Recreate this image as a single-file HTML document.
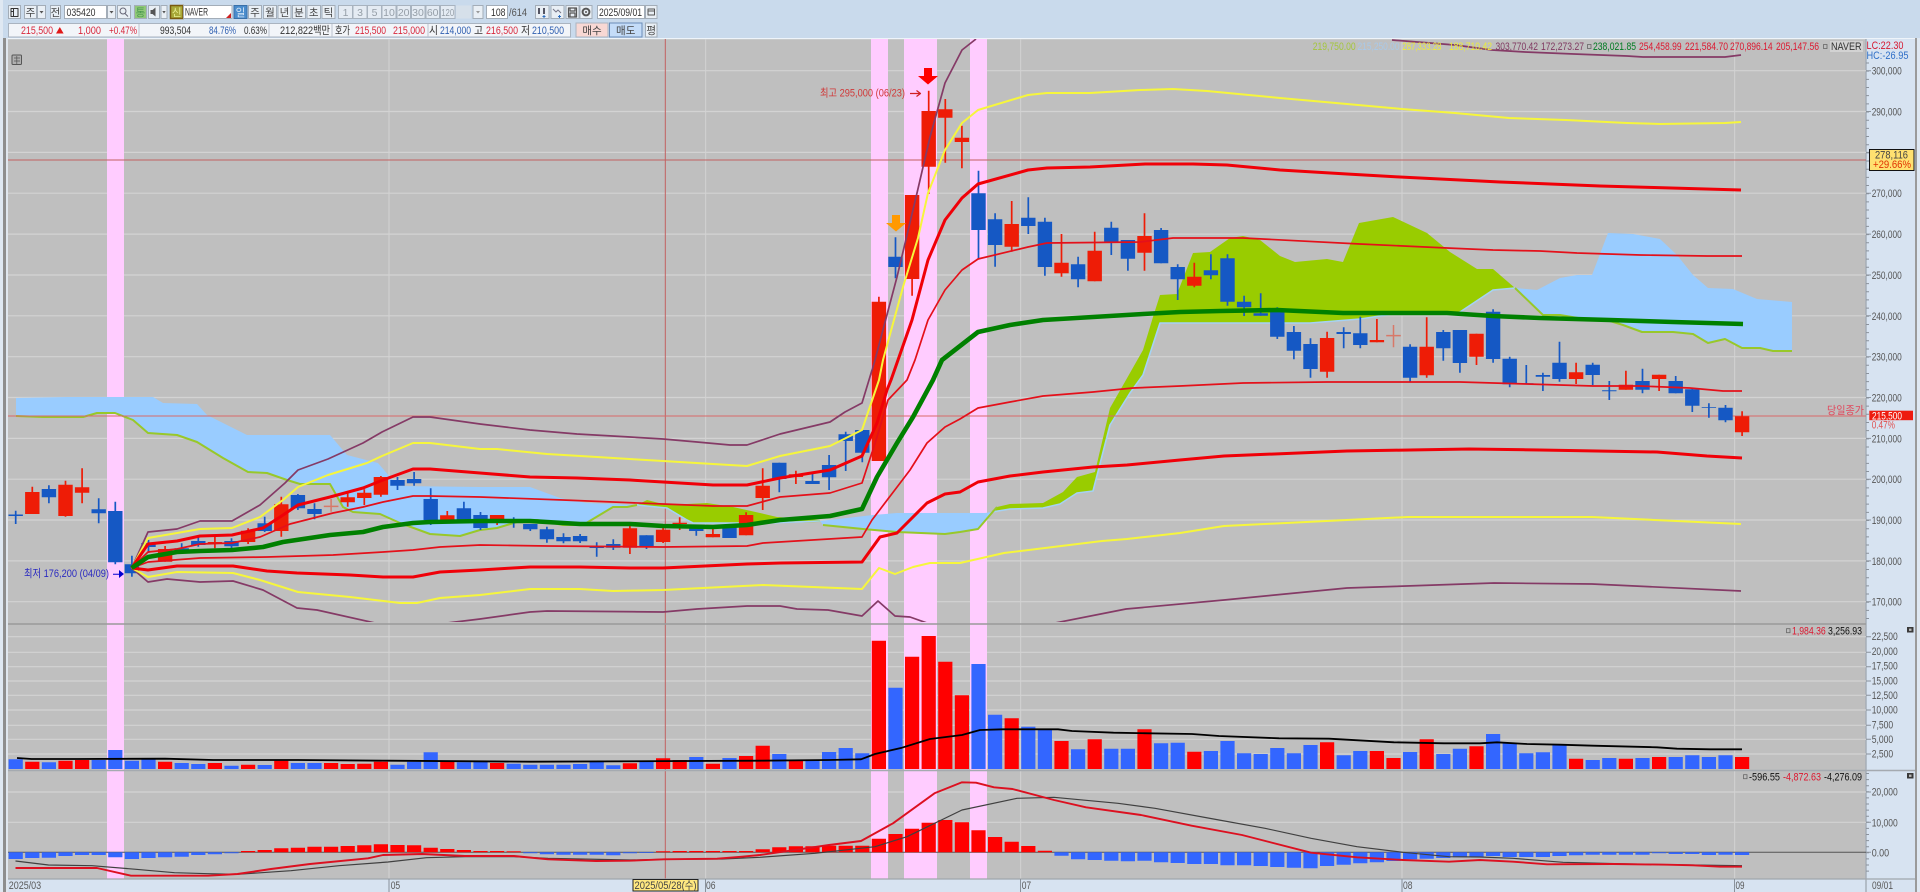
<!DOCTYPE html>
<html lang="ko"><head><meta charset="utf-8"><title>NAVER 035420</title>
<style>
html,body{margin:0;padding:0;background:#c9daec;width:1920px;height:892px;overflow:hidden}
svg{display:block;filter:blur(.35px)}
text{font-family:"Liberation Sans","Noto Sans CJK KR",sans-serif;font-size:11px}
.b{fill:#e9eff5;stroke:#a3adb8;stroke-width:1}
.t{fill:#454545;text-anchor:middle;font-size:10.5px}
.ax{fill:#555;font-size:11px}
.g{fill:none;stroke:#d3d3d3;stroke-width:1.2}
path,polyline,polygon{stroke-linejoin:round}
polyline{fill:none}
</style></head><body>
<svg width="1920" height="892" viewBox="0 0 1920 892" xmlns="http://www.w3.org/2000/svg">
<defs><clipPath id="m"><rect x="8" y="39" width="1858" height="583"/></clipPath></defs>
<rect width="1920" height="892" fill="#c9daec"/>
<rect x="0" y="0" width="3" height="892" fill="#dfe8f2"/><rect x="3" y="38" width="3" height="854" fill="#8e8e8e"/><rect x="6" y="38" width="2" height="854" fill="#dfe6ee"/>
<rect x="8" y="39" width="1858" height="840" fill="#bfbfbf"/>
<rect x="8" y="38" width="1907" height="1.2" fill="#eef4fa"/>
<!-- axis panel -->
<rect x="1866" y="39" width="49" height="853" fill="#d7e3f1"/>
<rect x="8" y="879" width="1858" height="13" fill="#d7e3f1"/>
<rect x="1915" y="38" width="2" height="854" fill="#9a9a9a"/><rect x="1917" y="38" width="3" height="854" fill="#dfe8f2"/>
<path d="M1866 39V892" stroke="#a3abb5" stroke-width="1.4"/>
<!-- grid -->
<path class="g" d="M8 70.7H1866M8 111.5H1866M8 152.4H1866M8 193.2H1866M8 234.1H1866M8 275H1866M8 315.8H1866M8 356.7H1866M8 397.5H1866M8 438.4H1866M8 479.2H1866M8 520H1866M8 560.9H1866M8 601.7H1866"/>
<path class="g" d="M8 636.7H1866M8 652.3H1866M8 666.7H1866M8 681H1866M8 695.3H1866M8 710H1866M8 725.3H1866M8 739.3H1866M8 754H1866M8 792H1866M8 822.3H1866"/>
<!-- pink -->
<path fill="#ffccff" d="M107 39h17V879h-17zM871 39h17V879h-17zM904 39h33V879h-33zM970 39h17V879h-17z"/>
<path fill="none" stroke="#d3d3d3" d="M389 39V879M705.7 39V879M1020.7 39V879M1402 39V879M1734.7 39V879"/>
<!-- cross -->
<path fill="none" stroke="#c26060" stroke-width="1" d="M665.3 39V879"/>
<g clip-path="url(#m)">
<polygon fill="#99ccff" points="16,398 67,397 153,397 163,403 197,404 207,415 247,435 330,435 347,455 378,463 390,477 397,486 480,487 530,487 560,498 587,503 637,505 627,507 613,507 583,525 563,525 537,520 517,522 497,528 480,530 460,536 430,534 400,523 380,514 353,512 343,507 330,484 300,484 287,480 267,473 248,472 223,458 197,442 177,435 148,433 133,420 115,413 97,413 83,417 43,417 16,416"/>
<polygon fill="#99ccff" points="820,521 847,518 873,515 897,513 985,513 992,512 978,529 960,532 945,534 897,532 863,529 823,525"/>
<polygon fill="#99ccff" points="1515,288 1537,290 1560,278 1577,275 1592,275 1608,233 1633,234 1660,239 1677,255 1693,275 1708,288 1733,289 1757,299 1792,302 1792,351 1773,351 1760,348 1742,348 1725,339 1708,343 1693,334 1673,332 1642,332 1623,325 1610,321 1590,320 1560,315 1543,315"/>
<polygon fill="#99cc00" points="637,505 647,500 667,505 707,503 733,507 760,513 777,517 820,520 820,522 770,523 693,523 687,520 667,508"/>
<polygon fill="#99cc00" points="992,511 997,507 1010,504 1043,503 1063,492 1077,477 1095,472 1110,408 1122,387 1143,350 1153,317 1160,295 1177,294 1193,253 1210,252 1230,238 1243,236 1260,240 1280,256 1295,262 1327,259 1343,262 1359,223 1393,217 1427,233 1450,252 1477,269 1493,269 1515,288 1493,290 1460,312 1447,314 1393,314 1360,319 1310,323 1160,323 1143,375 1130,393 1110,425 1093,491 1077,493 1060,504 1043,508 1010,509"/>
<polyline stroke="#a5d2f5" stroke-width="1.6" points="637,505 667,508 687,520 693,523 770,523 820,521"/>
<polyline stroke="#a5d2f5" stroke-width="1.6" points="992,512 1010,509 1043,508 1060,504 1077,493 1093,491 1110,425 1130,393 1143,375 1160,323 1310,323 1360,319 1393,314 1447,314 1460,312 1493,290 1515,288"/>
<polyline stroke="#98c82a" stroke-width="2" points="16,416 43,417 83,417 97,413 115,413 133,420 148,433 177,435 197,442 223,458 248,472 267,473 287,480 300,484 330,484 343,507 353,512 380,514 400,523 430,534 460,536 480,530 497,528 517,522 537,520 563,525 583,525 613,507 627,507 637,505"/>
<polyline stroke="#98c82a" stroke-width="2" points="823,525 863,529 897,532 945,534 960,532 978,529 990,515 997,507"/>
<polyline stroke="#98c82a" stroke-width="2" points="1515,288 1543,315 1560,315 1590,320 1610,321 1623,325 1642,332 1673,332 1693,334 1708,343 1725,339 1742,348 1760,348 1773,351 1792,351"/>
<!-- crosshair lines -->
<path fill="none" stroke="#c26060" stroke-width="1" d="M8 160H1866"/>
<path fill="none" stroke="#d86a6a" stroke-width="1" d="M8 416H1866"/>
<!-- candles wicks -->
<path fill="none" stroke="#ee1c06" stroke-width="1.7" d="M32.3 486.7V514M65.5 480.7V516.7M82.1 468.3V503.3M165.1 546V561.7M214.9 535V548.3M248.1 528.3V544M281.3 496.7V536.7M347.7 493.3V506.7M364.3 489.3V505M380.9 476V496.7M447.3 511V523M497.1 515V525M629.9 522V554M663.1 526V543M679.7 517.3V530M712.9 528.3V537.3M746.1 512.3V535.3M762.7 468.3V510M795.9 470.7V484M878.9 296.7V461M912.1 195V295.7M928.7 90.7V194M945.3 99V162.7M961.9 125.7V168.3M1011.7 201V251.7M1061.5 234V276.7M1094.7 231.7V281.3M1144.5 213.3V270.7M1194.3 262.7V287.3M1327.1 331.7V377.7M1376.9 319V342.3M1426.7 317.3V377.7M1476.5 333.7V365M1576.1 362.7V384M1625.9 370.7V389.7M1659.1 374.7V391M1742.1 411.3V436"/>
<path fill="none" stroke="#1558c4" stroke-width="1.7" d="M15.7 510.7V524M48.9 485.3V503.3M98.7 498.3V523.3M115.3 501.7V564.3M131.9 555.7V576.7M148.5 540V553M181.7 543.3V553.3M198.3 535V546.7M231.5 538.3V548.3M264.7 516.7V532M297.9 494V510M314.5 503.3V519.3M397.5 477V490M414.1 472V485.7M430.7 488.3V525M463.9 501.7V523.3M480.5 512V530M513.7 517.3V527.7M530.3 524V531M546.9 526.7V542.7M563.5 533.3V543.3M580.1 534V543M596.7 542.3V556.7M613.3 539.3V550M646.5 535.3V549M696.3 525V535.7M779.3 462.7V492.3M812.5 473.3V484M829.1 455V490M845.7 431.7V471M862.3 430V462.3M895.5 237.3V278.3M978.5 170.7V259.3M995.1 213.3V266.7M1028.3 197.3V234M1044.9 217.7V275.7M1078.1 256.7V287.3M1111.3 221.7V255M1127.9 240V270.7M1161.1 228V263.3M1177.7 264.3V300M1210.9 254.3V279.3M1227.5 254.3V305.7M1244.1 295.7V316M1260.7 293.3V315.7M1277.3 307.3V339M1293.9 326V359.3M1310.5 338.3V377.7M1343.7 327.3V348.3M1360.3 316.7V348.3M1410.1 344.3V381.7M1443.3 330V360.7M1459.9 330V372.7M1493.1 309.3V362.7M1509.7 356.7V387.3M1526.3 365V384.3M1542.9 372.7V391M1559.5 341.7V381.7M1592.7 362.7V385M1609.3 381V400M1642.5 368.7V393.3M1675.7 376V393.3M1692.3 388V412M1708.9 403.3V417.7M1725.5 405V422.3"/>
<path fill="none" stroke="#d87868" stroke-width="1.5" d="M331.1 499V511.7M323.8 506.4H338.4M1393.5 325V347.3M1386.2 335.6H1400.8"/>
<!-- bodies -->
<path fill="none" stroke="#ee1c06" stroke-width="14.4" d="M32.3 492V514M65.5 484.7V516M82.1 487.3V492.7M165.1 549V561.7M214.9 542V543.5M248.1 530.7V542M281.3 504.3V531M347.7 497.3V502.3M364.3 492.7V498M380.9 477V494.7M447.3 515.3V520M497.1 515V521.7M629.9 528.3V547.7M663.1 529.7V542M679.7 522.7V524M712.9 534V537.3M746.1 515V535.3M762.7 485.7V498M795.9 474.3V477M878.9 301.7V461M912.1 195V279M928.7 111V166.7M945.3 109.3V117.7M961.9 137.7V142M1011.7 224V246.7M1061.5 262.7V273.3M1094.7 250.7V281.3M1144.5 236V252.7M1194.3 276.7V285.7M1327.1 338V371.7M1376.9 340V342.3M1426.7 346.7V375.3M1476.5 333.7V356.7M1576.1 372.3V379M1625.9 384.7V389.7M1659.1 374.7V379M1742.1 416.3V432.3"/>
<path fill="none" stroke="#1558c4" stroke-width="14.4" d="M15.7 514.5V516M48.9 489V497.3M98.7 509.3V513.3M115.3 511V562.3M131.9 564.3V573.3M148.5 543V547M181.7 548.3V550.7M198.3 541V545M231.5 541V546.3M264.7 523.3V531M297.9 495V508.3M314.5 509V514M397.5 480V485.7M414.1 479V483.3M430.7 499V520M463.9 508.3V521.7M480.5 515V528M513.7 520V521M530.3 524V529.3M546.9 529.3V539.3M563.5 537V541.3M580.1 536V541.3M596.7 546.7V548M613.3 544V547.7M646.5 535.3V546M696.3 528.3V531M729.5 526.7V538M779.3 462.7V479M812.5 481V484M829.1 465V477.3M845.7 434.3V441M862.3 430V452.7M895.5 256.7V267M978.5 193.3V230M995.1 219.3V245M1028.3 217.7V226M1044.9 221.7V267M1078.1 264.3V279.3M1111.3 227.7V241.7M1127.9 240V258.7M1161.1 230V263.3M1177.7 267V279.3M1210.9 270.3V275.3M1227.5 258.3V301.7M1244.1 301.7V307.3M1260.7 313.3V315.7M1277.3 310V336.7M1293.9 332V350.7M1310.5 344V369M1343.7 332V334M1360.3 333.3V345M1410.1 346.7V377.7M1443.3 332V348.3M1459.9 330V363M1493.1 311.7V359M1509.7 358.7V384.3M1526.3 383.3V384.3M1542.9 375V376.7M1559.5 362.7V379M1592.7 364.7V375M1609.3 390.3V391.3M1642.5 381V389.7M1675.7 381V393.3M1692.3 389.3V405.7M1708.9 407.3V408M1725.5 407.7V420.3"/>
<!-- bands -->
<polyline stroke="#853a66" stroke-width="1.7" points="131.7,568 148,532 177,529 200,521 232,521 260,505 285,483 298,470 328,459 363,443 382,432 413,417 430,417 480,424 530,430 577,434 630,437 663,439 697,442 730,445 747,445 780,434 830,422 845,412 862,403 869,380 875,360 897,277 917,193 930,137 945,83 962,50 976,39"/>
<polyline stroke="#853a66" stroke-width="1.7" points="1392,40 1455,45 1492,50 1525,52 1574,54 1627,56 1643,57 1725,57 1741,55"/>
<polyline stroke="#853a66" stroke-width="1.7" points="131.7,568 148,582 167,579 200,582 233,581 263,590 297,608 317,610 375,623"/>
<polyline stroke="#853a66" stroke-width="1.7" points="447,623 480,619 530,612 547,611 663,612 697,609 747,606 780,606 797,609 828,610 862,616 878,601 895,616 910,617 927,623"/>
<polyline stroke="#853a66" stroke-width="1.7" points="1050,624 1126,609 1224,600 1347,588 1494,583 1592,584 1741,591"/>
<polyline stroke="#f6f63c" stroke-width="2" points="131.7,568 148,538 177,533 200,529 232,528 260,517 283,500 298,487 328,475 367,463 382,456 413,443 430,443 480,449 497,449 547,454 597,457 663,461 713,464 747,466 780,456 830,446 862,430 879,380 883,360 903,287 918,238 928,193 945,150 962,123 978,110 1028,95 1047,93 1090,93 1140,90 1173,89 1207,91 1280,98 1347,104 1402,109 1455,113 1509,118 1566,120 1627,123 1660,124 1725,123 1741,122"/>
<polyline stroke="#f6f63c" stroke-width="2" points="131.7,568 148,577 177,572 233,573 260,580 298,592 350,597 400,603 417,603 440,598 480,595 530,589 580,589 613,591 663,590 763,585 862,589 879,568 895,574 913,567 930,563 960,563 1004,553 1102,541 1127,539 1180,533 1224,526 1408,517 1592,517 1741,524"/>
<polyline stroke="#e4101a" stroke-width="1.7" points="131.7,568 148,552 177,549 200,544 232,543 260,537 290,524 333,513 363,507 383,502 413,496 430,496 480,497 563,500 613,502 663,504 713,506 747,506 780,497 830,493 862,483 877,437 888,400 907,380 915,360 928,320 945,290 962,270 978,259 1028,247 1047,243 1140,242 1173,238 1243,238 1360,244 1447,248 1493,250 1540,251 1577,253 1640,255 1707,256 1742,256"/>
<polyline stroke="#e4101a" stroke-width="1.7" points="131.7,568 148,562 200,558 267,557 333,555 383,552 413,550 440,547 480,545 547,546 663,547 747,546 763,543 862,537 872,520 910,470 927,443 945,427 960,419 978,408 1010,402 1043,396 1093,392 1133,388 1180,386 1243,383 1327,382 1460,382 1527,384 1593,386 1640,386 1690,388 1723,391 1742,391"/>
<polyline stroke="#f00008" stroke-width="3" points="131.7,568 148,544 177,541 200,536 232,535 263,528 280,517 298,505 330,497 363,488 383,480 413,469 430,469 480,473 530,477 577,478 630,480 663,482 713,485 747,485 780,478 830,470 862,456 877,423 887,390 891,380 898,360 912,320 928,260 945,220 962,198 978,184 1028,170 1047,168 1090,167 1145,164 1193,164 1227,165 1280,170 1347,174 1400,177 1500,182 1600,186 1741,190"/>
<polyline stroke="#f00008" stroke-width="3" points="131.7,568 148,570 177,566 233,566 267,571 297,573 350,575 383,577 413,577 440,572 480,570 530,567 580,567 630,568 663,568 747,564 780,563 862,562 880,537 897,533 927,503 945,494 960,492 978,482 1010,476 1043,472 1093,467 1127,465 1180,460 1224,456 1347,451 1469,449 1540,450 1657,452 1707,456 1742,458"/>
<polyline stroke="#008000" stroke-width="4.6" points="131.7,568 148,557 177,552 200,551 232,550 263,547 283,542 330,535 363,532 383,527 413,523 430,522 480,521 530,521 580,524 630,524 663,526 713,527 747,525 780,520 830,516 862,509 877,477 897,443 913,417 933,380 942,360 960,346 978,332 1010,325 1043,320 1093,317 1143,314 1180,312 1220,311 1277,310 1343,313 1447,313 1493,316 1540,318 1610,320 1673,322 1743,324"/>
</g>
<!-- annotations -->
<path fill="#ff0000" d="M924 68h8v8h6l-10 8.5-10-8.5h6z"/>
<path fill="#ff9900" d="M892 215h8v8h6l-10 8.5-10-8.5h6z"/>
<text x="820" y="96.5" textLength="85" lengthAdjust="spacingAndGlyphs" fill="#d03838">최고 295,000 (06/23)</text>
<path fill="none" stroke="#d02020" stroke-width="1.2" d="M910 93.5H920M916.5 90.5L920.5 93.5 916.5 96.5"/>
<text x="24" y="577" textLength="85" lengthAdjust="spacingAndGlyphs" fill="#2a2ac0">최저 176,200 (04/09)</text>
<path fill="#0000d0" d="M113 573.8h6V570l5 4-5 4v-3.2h-6z"/>
<text x="1827" y="414" textLength="37" lengthAdjust="spacingAndGlyphs" fill="#e0485c">당일종가</text>
<!-- separators -->
<path fill="none" stroke="#9a9a9a" stroke-width="1.6" d="M8 624H1866"/>
<path fill="none" stroke="#a5aab0" stroke-width="1.6" d="M8 770.5H1915"/>
<path fill="none" stroke="#a0a6ac" stroke-width="1.2" d="M8 879H1915"/>
<!-- Volume bars -->
<path fill="none" stroke="#3366ff" stroke-width="14.2" d="M15.7 769V759.3M48.9 769V762.3M98.7 769V760M115.3 769V750M131.9 769V760.7M148.5 769V759M181.7 769V763M198.3 769V764M231.5 769V765.7M264.7 769V765M297.9 769V763M314.5 769V763M397.5 769V764.7M414.1 769V761.7M430.7 769V752.3M463.9 769V762.3M480.5 769V761.3M513.7 769V763.7M530.3 769V764.7M546.9 769V764.7M563.5 769V764.7M580.1 769V764M596.7 769V762M613.3 769V765.3M646.5 769V762M696.3 769V757M729.5 769V758M779.3 769V754M812.5 769V760M829.1 769V752M845.7 769V748M862.3 769V753.3M895.5 769V687.7M978.5 769V664M995.1 769V714.7M1028.3 769V726.7M1044.9 769V730M1078.1 769V749.3M1111.3 769V748.7M1127.9 769V748.7M1161.1 769V743.3M1177.7 769V742.7M1210.9 769V751M1227.5 769V741M1244.1 769V753.3M1260.7 769V754M1277.3 769V748M1293.9 769V753.3M1310.5 769V745M1343.7 769V755.3M1360.3 769V751M1410.1 769V752M1443.3 769V754M1459.9 769V748.7M1493.1 769V734M1509.7 769V743.3M1526.3 769V753.3M1542.9 769V752.3M1559.5 769V745M1592.7 769V760M1609.3 769V758M1642.5 769V758M1675.7 769V757M1692.3 769V755.3M1708.9 769V757M1725.5 769V755.3"/>
<path fill="none" stroke="#ff0000" stroke-width="14.2" d="M32.3 769V761.7M65.5 769V760.7M82.1 769V760M165.1 769V761.7M214.9 769V763M248.1 769V764.7M281.3 769V760.7M331.1 769V763M347.7 769V764M364.3 769V763.7M380.9 769V761.7M447.3 769V761.7M497.1 769V763M629.9 769V763.3M663.1 769V758.3M679.7 769V760M712.9 769V763.7M746.1 769V756M762.7 769V745.7M795.9 769V760M878.9 769V640.7M912.1 769V656.7M928.7 769V636M945.3 769V661.7M961.9 769V695.3M1011.7 769V718.3M1061.5 769V741M1094.7 769V739.3M1144.5 769V729.3M1194.3 769V751.7M1327.1 769V742.3M1376.9 769V751M1393.5 769V758M1426.7 769V739.3M1476.5 769V746.3M1576.1 769V758.7M1625.9 769V758.7M1659.1 769V757M1742.1 769V757"/>
<polyline stroke="#000" stroke-width="1.8" points="17,758 31.5,759 78,759 165,758.7 213,760 298,760 388,760.7 531,761.7 760,760.7 829,760 861,759.3 875,754 902,747.7 930,739 962,735 980,730 1003,729.3 1058,729.3 1072,731 1113.5,732.7 1192,734 1219,736 1279,738.3 1329,738.7 1394,742.3 1444,743.3 1480,743.3 1497,742.3 1527,744 1560,744.7 1593,745.7 1657,747.3 1677,748.7 1710,749.3 1742,749.3"/>
<!-- MACD -->
<path fill="none" stroke="#555" stroke-width="1" d="M8 852.3H1866"/>
<path fill="none" stroke="#3366ff" stroke-width="14.2" d="M15.7 852.3V859M32.3 852.3V858M48.9 852.3V857.7M65.5 852.3V856M82.1 852.3V855M98.7 852.3V855M115.3 852.3V857.3M131.9 852.3V859M148.5 852.3V858M165.1 852.3V857.3M181.7 852.3V856.7M198.3 852.3V855M214.9 852.3V854.3M231.5 852.3V853.3M530.3 852.3V853.3M546.9 852.3V854.3M563.5 852.3V854.7M580.1 852.3V854.7M596.7 852.3V854.7M613.3 852.3V855.3M629.9 852.3V853.3M646.5 852.3V853M1061.5 852.3V855.7M1078.1 852.3V859.3M1094.7 852.3V860M1111.3 852.3V860.7M1127.9 852.3V861.3M1144.5 852.3V860.7M1161.1 852.3V862.3M1177.7 852.3V863M1194.3 852.3V864M1210.9 852.3V864M1227.5 852.3V865.3M1244.1 852.3V865.3M1260.7 852.3V866M1277.3 852.3V867M1293.9 852.3V867.7M1310.5 852.3V868.3M1327.1 852.3V866M1343.7 852.3V864.7M1360.3 852.3V863.3M1376.9 852.3V862.3M1393.5 852.3V861M1410.1 852.3V859.3M1426.7 852.3V858.7M1443.3 852.3V858M1459.9 852.3V857.3M1476.5 852.3V856.7M1493.1 852.3V856M1509.7 852.3V857M1526.3 852.3V857M1542.9 852.3V857M1559.5 852.3V856M1576.1 852.3V855.3M1592.7 852.3V854.7M1609.3 852.3V854.7M1625.9 852.3V854.7M1642.5 852.3V854.7M1659.1 852.3V853.3M1675.7 852.3V854M1692.3 852.3V854M1708.9 852.3V855M1725.5 852.3V854.7M1742.1 852.3V855"/>
<path fill="none" stroke="#ff0000" stroke-width="14.2" d="M248.1 852.3V851M264.7 852.3V850M281.3 852.3V848.3M297.9 852.3V847.7M314.5 852.3V846.7M331.1 852.3V846.7M347.7 852.3V846M364.3 852.3V845.3M380.9 852.3V844.3M397.5 852.3V845M414.1 852.3V845.3M430.7 852.3V847.7M447.3 852.3V849M463.9 852.3V850M480.5 852.3V851M497.1 852.3V851M513.7 852.3V851.3M663.1 852.3V851.3M679.7 852.3V851M696.3 852.3V851M712.9 852.3V851M729.5 852.3V851M746.1 852.3V851M762.7 852.3V849.3M779.3 852.3V847.3M795.9 852.3V846.3M812.5 852.3V846.3M829.1 852.3V845.7M845.7 852.3V845.7M862.3 852.3V845.7M878.9 852.3V838.7M895.5 852.3V834M912.1 852.3V828.7M928.7 852.3V822.7M945.3 852.3V820M961.9 852.3V822.3M978.5 852.3V830.3M995.1 852.3V837M1011.7 852.3V841.7M1028.3 852.3V846M1044.9 852.3V850.7"/>
<polyline stroke="#404040" stroke-width="1.2" points="15.5,861 48.5,865 92,865.7 136,869.3 174.5,872.7 208,873.7 237.5,874.3 291,870.7 339,865.7 388,862 426.5,857.7 465,856.7 514,856.7 548,858.3 630,860 664,859.3 722,859 760,857.3 815,853.3 875,846.7 907,836.7 962,810 1017,798.3 1054,797.3 1118,803.3 1155,808.3 1219,820 1265,828.3 1311,838.3 1357,846.7 1403,852.3 1449,856.7 1480,857 1513,858.3 1563,862.3 1630,864 1742,865.7"/>
<polyline stroke="#dc1020" stroke-width="1.9" points="15.5,868 97,868 131,875.7 208,875.7 237.5,874 271,869 310,864 368,858.3 383,855 422,854 465,856 514,856 548,859.3 596,861 630,860.7 664,859.3 717,858.7 742,856.7 760,855 829,845 861,841 893,823.3 934.5,793.3 962,782.3 976,782.7 994,787.3 1012.5,789 1054,800 1086,807.3 1141,815 1191.6,825.7 1242,835 1311,852.7 1357,857.3 1403,860 1449,861.7 1480,860 1513,861.7 1547,864.3 1613,864 1667,864.7 1693,865.3 1720,866.7 1742,866.7"/>
<!-- top legend -->
<g>
<text x="1312.7" y="50" textLength="43" lengthAdjust="spacingAndGlyphs" fill="#a4c63c">219,750.00</text>
<text x="1357.5" y="50" textLength="42" lengthAdjust="spacingAndGlyphs" fill="#a9c9e9">215,250.00</text>
<text x="1402.4" y="50" textLength="39" lengthAdjust="spacingAndGlyphs" fill="#ecec3c">287,333.28</text>
<text x="1449" y="50" textLength="43" lengthAdjust="spacingAndGlyphs" fill="#ecec3c">188,710.42</text>
<text x="1495.5" y="50" textLength="42.5" lengthAdjust="spacingAndGlyphs" fill="#803a62">303,770.42</text>
<text x="1541" y="50" textLength="43" lengthAdjust="spacingAndGlyphs" fill="#803a62">172,273.27</text>
<rect x="1587.5" y="44.5" width="3.5" height="4" fill="none" stroke="#666" stroke-width=".8"/>
<text x="1593" y="50" textLength="43" lengthAdjust="spacingAndGlyphs" fill="#007a20">238,021.85</text>
<text x="1639" y="50" textLength="42.6" lengthAdjust="spacingAndGlyphs" fill="#dc1830">254,458.99</text>
<text x="1685" y="50" textLength="43" lengthAdjust="spacingAndGlyphs" fill="#dc1830">221,584.70</text>
<text x="1730" y="50" textLength="42.6" lengthAdjust="spacingAndGlyphs" fill="#dc1830">270,896.14</text>
<text x="1776" y="50" textLength="43" lengthAdjust="spacingAndGlyphs" fill="#dc1830">205,147.56</text>
<rect x="1823.5" y="44.5" width="3.5" height="4" fill="none" stroke="#666" stroke-width=".8"/>
<rect x="1830" y="41" width="33" height="11" fill="#d2d2d2"/>
<text x="1831" y="50" textLength="30.6" lengthAdjust="spacingAndGlyphs" fill="#333">NAVER</text>
<text x="1866.5" y="49" textLength="37" lengthAdjust="spacingAndGlyphs" fill="#d61830">LC:22.30</text>
<text x="1866.5" y="59" textLength="42" lengthAdjust="spacingAndGlyphs" fill="#2f6fc8">HC:-26.95</text>
</g>
<rect x="1786.5" y="628.7" width="3.5" height="4" fill="none" stroke="#666" stroke-width=".8"/>
<text x="1792" y="634.7" textLength="33.7" lengthAdjust="spacingAndGlyphs" fill="#dc1830">1,984.36</text>
<text x="1828" y="634.7" textLength="34" lengthAdjust="spacingAndGlyphs" fill="#111">3,256.93</text>
<rect x="1743.5" y="774.7" width="3.5" height="4" fill="none" stroke="#666" stroke-width=".8"/>
<text x="1749" y="780.7" textLength="31" lengthAdjust="spacingAndGlyphs" fill="#111">-596.55</text>
<text x="1783" y="780.7" textLength="38" lengthAdjust="spacingAndGlyphs" fill="#dc1830">-4,872.63</text>
<text x="1824" y="780.7" textLength="38" lengthAdjust="spacingAndGlyphs" fill="#111">-4,276.09</text>
<!-- price axis -->
<path fill="none" stroke="#8a929c" stroke-width="1" d="M1866 70.7h5M1866 111.5h5M1866 152.4h5M1866 193.2h5M1866 234.1h5M1866 275h5M1866 315.8h5M1866 356.7h5M1866 397.5h5M1866 438.4h5M1866 479.2h5M1866 520h5M1866 560.9h5M1866 601.7h5M1866 636.7h5M1866 652.3h5M1866 666.7h5M1866 681h5M1866 695.3h5M1866 710h5M1866 725.3h5M1866 739.3h5M1866 754h5M1866 792h5M1866 822.3h5M1866 852.3h5"/>
<path fill="none" stroke="#8a929c" stroke-width="3" stroke-dasharray="1 7.17" d="M1867.5 62.5V622"/>
<path fill="none" stroke="#8a929c" stroke-width="3" stroke-dasharray="1 5.1" d="M1867.5 773V876"/>
<g class="ax">
<text class="ax" x="1871.7" y="74.7" textLength="30" lengthAdjust="spacingAndGlyphs">300,000</text>
<text class="ax" x="1871.7" y="115.5" textLength="30" lengthAdjust="spacingAndGlyphs">290,000</text>
<text class="ax" x="1871.7" y="197.2" textLength="30" lengthAdjust="spacingAndGlyphs">270,000</text>
<text class="ax" x="1871.7" y="238" textLength="30" lengthAdjust="spacingAndGlyphs">260,000</text>
<text class="ax" x="1871.7" y="279" textLength="30" lengthAdjust="spacingAndGlyphs">250,000</text>
<text class="ax" x="1871.7" y="319.8" textLength="30" lengthAdjust="spacingAndGlyphs">240,000</text>
<text class="ax" x="1871.7" y="360.7" textLength="30" lengthAdjust="spacingAndGlyphs">230,000</text>
<text class="ax" x="1871.7" y="401.5" textLength="30" lengthAdjust="spacingAndGlyphs">220,000</text>
<text class="ax" x="1871.7" y="442.4" textLength="30" lengthAdjust="spacingAndGlyphs">210,000</text>
<text class="ax" x="1871.7" y="483" textLength="30" lengthAdjust="spacingAndGlyphs">200,000</text>
<text class="ax" x="1871.7" y="524" textLength="30" lengthAdjust="spacingAndGlyphs">190,000</text>
<text class="ax" x="1871.7" y="564.9" textLength="30" lengthAdjust="spacingAndGlyphs">180,000</text>
<text class="ax" x="1871.7" y="605.7" textLength="30" lengthAdjust="spacingAndGlyphs">170,000</text>
<text class="ax" x="1871.7" y="640" textLength="26" lengthAdjust="spacingAndGlyphs">22,500</text>
<text class="ax" x="1871.7" y="655" textLength="26" lengthAdjust="spacingAndGlyphs">20,000</text>
<text class="ax" x="1871.7" y="669.7" textLength="26" lengthAdjust="spacingAndGlyphs">17,500</text>
<text class="ax" x="1871.7" y="684.3" textLength="26" lengthAdjust="spacingAndGlyphs">15,000</text>
<text class="ax" x="1871.7" y="699" textLength="26" lengthAdjust="spacingAndGlyphs">12,500</text>
<text class="ax" x="1871.7" y="713.3" textLength="26" lengthAdjust="spacingAndGlyphs">10,000</text>
<text class="ax" x="1871.7" y="728.7" textLength="21.5" lengthAdjust="spacingAndGlyphs">7,500</text>
<text class="ax" x="1871.7" y="743" textLength="21.5" lengthAdjust="spacingAndGlyphs">5,000</text>
<text class="ax" x="1871.7" y="757.7" textLength="21.5" lengthAdjust="spacingAndGlyphs">2,500</text>
<text class="ax" x="1871.7" y="795.7" textLength="26" lengthAdjust="spacingAndGlyphs">20,000</text>
<text class="ax" x="1871.7" y="826.3" textLength="26" lengthAdjust="spacingAndGlyphs">10,000</text>
<text class="ax" x="1871.7" y="856.3" textLength="17.5" lengthAdjust="spacingAndGlyphs">0.00</text>
</g>
<rect x="1869.5" y="149.5" width="44.5" height="21" fill="#ffe070" stroke="#111" stroke-width="1"/>
<text x="1875" y="158.7" textLength="33" lengthAdjust="spacingAndGlyphs" fill="#444">278,116</text>
<text x="1873" y="168" textLength="38" lengthAdjust="spacingAndGlyphs" fill="#e03000">+29.66%</text>
<rect x="1869.3" y="410.7" width="43.7" height="9.5" fill="#ee1c10"/>
<text x="1872" y="419.5" textLength="30" lengthAdjust="spacingAndGlyphs" fill="#fff">215,500</text>
<text x="1871.7" y="428.3" textLength="23.3" lengthAdjust="spacingAndGlyphs" fill="#e05050">0.47%</text>
<path fill="#3a3a3a" d="M1907 627h6.5v5.500H1907zM1907 773h6.5v5.500H1907z"/>
<rect x="1909" y="628.6" width="2.5" height="2.3" fill="#bbb"/><rect x="1909" y="774.6" width="2.5" height="2.3" fill="#bbb"/>
<rect x="12" y="55" width="9.500" height="9.500" rx="1" fill="#b0b0b0" stroke="#555" stroke-width="1"/><path fill="none" stroke="#555" stroke-width=".7" d="M14 58H20M14 61H20M16.8 56V64"/>
<!-- date axis -->
<g fill="#5a5a5a">
<text x="8.7" y="889" textLength="32.5" lengthAdjust="spacingAndGlyphs" fill="#5a5a5a">2025/03</text>
<text x="390.7" y="889" textLength="9.5" lengthAdjust="spacingAndGlyphs" fill="#5a5a5a">05</text>
<text x="706" y="889" textLength="9.5" lengthAdjust="spacingAndGlyphs" fill="#5a5a5a">06</text>
<text x="1021.7" y="889" textLength="9.5" lengthAdjust="spacingAndGlyphs" fill="#5a5a5a">07</text>
<text x="1403" y="889" textLength="9.5" lengthAdjust="spacingAndGlyphs" fill="#5a5a5a">08</text>
<text x="1735.5" y="889" textLength="9" lengthAdjust="spacingAndGlyphs" fill="#5a5a5a">09</text>
<text x="1872" y="889" textLength="21" lengthAdjust="spacingAndGlyphs" fill="#5a5a5a">09/01</text>
</g>
<path fill="none" stroke="#8a929c" d="M389 879V892M705.5 879V892M1020.5 879V892M1402 879V892M1734.5 879V892"/>
<rect x="633" y="879.5" width="65" height="11.5" fill="#ffe880" stroke="#222" stroke-width="1"/>
<text x="634.5" y="889" textLength="62" lengthAdjust="spacingAndGlyphs" fill="#444">2025/05/28(수)</text>
<!-- toolbar row 1 -->
<g>
<rect class="b" x="8.5" y="5.5" width="12" height="13"/><path fill="none" stroke="#333" d="M11 8.5h7v8h-7zM13.5 8.5v8M11 11.5h2.5"/>
<rect class="b" x="24.5" y="5.5" width="12" height="13"/><text class="t" x="30.5" y="16">주</text>
<rect class="b" x="37.5" y="5.5" width="8" height="13"/><path fill="#555" d="M39.5 11h4l-2 2.5z"/>
<rect class="b" x="50.5" y="5.5" width="10" height="13"/><text class="t" x="55.5" y="16">전</text>
<rect x="64.5" y="5.5" width="42" height="13" fill="#fff" stroke="#a3adb8"/><text x="66.5" y="16" textLength="29" lengthAdjust="spacingAndGlyphs" fill="#333">035420</text>
<rect class="b" x="107.5" y="5.5" width="8" height="13"/><path fill="#555" d="M109.5 11h4l-2 2.5z"/>
<rect class="b" x="117.5" y="5.5" width="13" height="13"/><circle cx="123" cy="11" r="3" fill="none" stroke="#667"/><path stroke="#667" d="M125 13.5l3 3"/>
<rect x="134.5" y="5.5" width="12" height="13" fill="#90c878" stroke="#a3adb8"/><text class="t" x="140.5" y="16" style="fill:#4c9a50">통</text>
<rect class="b" x="148.5" y="5.5" width="11" height="13"/><path fill="#555" d="M150.5 10h2l3-2.5v9l-3-2.5h-2z"/>
<rect class="b" x="161" y="5.5" width="6" height="13"/><path fill="#555" d="M162.3 11h3.4l-1.7 2.5z"/>
<rect x="170.5" y="5.5" width="12.5" height="13" fill="#a8a838" stroke="#7a5a10" stroke-width="1.5"/><text class="t" x="176.7" y="16" style="fill:#e6ec90">신</text>
<rect x="183.5" y="5.5" width="48.5" height="13" fill="#fff" stroke="#a3adb8"/><text x="185" y="15.5" textLength="23" lengthAdjust="spacingAndGlyphs" fill="#333">NAVER</text><path fill="#d02020" d="M231 13v5h-5z"/>
<rect x="234" y="5.5" width="13" height="13" fill="#4a8ccc" stroke="#3a70a8"/><text class="t" x="240.5" y="16" style="fill:#d8e8f8">일</text>
<rect class="b" x="248.5" y="5.5" width="13" height="13"/><text class="t" x="255" y="16">주</text>
<rect class="b" x="263.5" y="5.5" width="13" height="13"/><text class="t" x="270" y="16">월</text>
<rect class="b" x="278" y="5.5" width="13" height="13"/><text class="t" x="284.5" y="16">년</text>
<rect class="b" x="292.5" y="5.5" width="13" height="13"/><text class="t" x="299" y="16">분</text>
<rect class="b" x="307" y="5.5" width="13.5" height="13"/><text class="t" x="313.7" y="16">초</text>
<rect class="b" x="322" y="5.5" width="13" height="13"/><text class="t" x="328.5" y="16">틱</text>
<g style="opacity:.85">
<rect class="b" x="338.5" y="5.5" width="14" height="13"/><text class="t" x="345.5" y="16" style="fill:#8d949c">1</text>
<rect class="b" x="353" y="5.5" width="14" height="13"/><text class="t" x="360" y="16" style="fill:#8d949c">3</text>
<rect class="b" x="367.5" y="5.5" width="14" height="13"/><text class="t" x="374.5" y="16" style="fill:#8d949c">5</text>
<rect class="b" x="382" y="5.5" width="14" height="13"/><text class="t" x="389" y="16" style="fill:#8d949c">10</text>
<rect class="b" x="397" y="5.5" width="13.5" height="13"/><text class="t" x="403.7" y="16" style="fill:#8d949c">20</text>
<rect class="b" x="411.5" y="5.5" width="13.5" height="13"/><text class="t" x="418" y="16" style="fill:#8d949c">30</text>
<rect class="b" x="426" y="5.5" width="13.5" height="13"/><text class="t" x="432.7" y="16" style="fill:#8d949c">60</text>
<rect class="b" x="440.5" y="5.5" width="14.5" height="13"/><text class="t" x="447.7" y="16" textLength="13" lengthAdjust="spacingAndGlyphs" style="fill:#8d949c">120</text>
</g>
<rect x="456" y="5.5" width="15" height="13" fill="#d6e0ea"/>
<rect class="b" x="473" y="5.5" width="10" height="13"/><path fill="#999" d="M476 11h4l-2 2.5z"/>
<rect x="486.5" y="5.5" width="21" height="13" fill="#fff" stroke="#a3adb8"/><text x="491" y="16" textLength="14.5" lengthAdjust="spacingAndGlyphs" fill="#333">108</text>
<text x="509" y="16" textLength="18" lengthAdjust="spacingAndGlyphs" fill="#555">/614</text>
<rect class="b" x="535.5" y="5.5" width="13.5" height="13"/><path fill="none" stroke="#223" stroke-width="1.5" d="M539 8v6M544 8v6"/><path stroke="#2a6cc0" d="M544 15v3M542.5 16.5h3"/>
<rect class="b" x="551" y="5.5" width="13" height="13"/><path fill="none" stroke="#778" d="M553 9l3 3 2-2 3 3"/><path stroke="#2a6cc0" d="M559.5 15v3M558 16.5h3"/>
<rect class="b" x="566" y="5.5" width="13" height="13"/><path fill="none" stroke="#555" stroke-width="1.2" d="M568.5 8h8v9h-8zM570 8v3h5V8M570 17v-4h5v4"/>
<rect class="b" x="580" y="5.5" width="12" height="13"/><circle cx="586" cy="12" r="3.4" fill="none" stroke="#555" stroke-width="2"/><circle cx="586" cy="12" r="1" fill="#555"/>
<rect x="597.5" y="5.5" width="47" height="13" fill="#fff" stroke="#a3adb8"/><text x="599" y="16" textLength="43" lengthAdjust="spacingAndGlyphs" fill="#333">2025/09/01</text>
<rect class="b" x="645.5" y="5.5" width="11.5" height="13"/><path fill="none" stroke="#555" d="M648 9h6.5v6H648zM648 11h6.5"/>
</g>
<!-- row 2 -->
<rect x="8.5" y="23.5" width="562" height="13.5" fill="#f2f5f9" stroke="#aab4c0"/>
<path stroke="#bcc4ce" d="M139 24V37M269 24V37M332 24V37M428 24V37"/>
<g>
<text x="21" y="34" textLength="32" lengthAdjust="spacingAndGlyphs" fill="#d8283c">215,500</text>
<path fill="#e01818" d="M56 33.5l3.8-6.5 3.8 6.5z"/>
<text x="78" y="34" textLength="23" lengthAdjust="spacingAndGlyphs" fill="#d8283c">1,000</text>
<text x="109" y="34" textLength="28" lengthAdjust="spacingAndGlyphs" fill="#d8283c">+0.47%</text>
<text x="160" y="34" textLength="31" lengthAdjust="spacingAndGlyphs" fill="#333">993,504</text>
<text x="209" y="34" textLength="27" lengthAdjust="spacingAndGlyphs" fill="#2f5fb0">84.76%</text>
<text x="244" y="34" textLength="23" lengthAdjust="spacingAndGlyphs" fill="#333">0.63%</text>
<text x="280" y="34" textLength="50" lengthAdjust="spacingAndGlyphs" fill="#333">212,822백만</text>
<text x="335" y="34" textLength="15" lengthAdjust="spacingAndGlyphs" fill="#333">호가</text>
<text x="355" y="34" textLength="31" lengthAdjust="spacingAndGlyphs" fill="#d8283c">215,500</text>
<text x="393" y="34" textLength="32" lengthAdjust="spacingAndGlyphs" fill="#d8283c">215,000</text>
<text x="429" y="34" textLength="9" lengthAdjust="spacingAndGlyphs" fill="#333">시</text>
<text x="440" y="34" textLength="31" lengthAdjust="spacingAndGlyphs" fill="#2f5fb0">214,000</text>
<text x="474" y="34" textLength="9" lengthAdjust="spacingAndGlyphs" fill="#333">고</text>
<text x="486" y="34" textLength="32" lengthAdjust="spacingAndGlyphs" fill="#d8283c">216,500</text>
<text x="521" y="34" textLength="9" lengthAdjust="spacingAndGlyphs" fill="#333">저</text>
<text x="532" y="34" textLength="32" lengthAdjust="spacingAndGlyphs" fill="#2f5fb0">210,500</text>
</g>
<rect x="576" y="23" width="32" height="14" fill="#f8d8d4" stroke="#aab4c0"/><text class="t" x="592" y="34" style="fill:#444">매수</text>
<rect x="609.5" y="23" width="32.5" height="14" fill="#c4dcf8" stroke="#6a8cb8"/><text class="t" x="625.7" y="34" style="fill:#444">매도</text>
<rect class="b" x="645.5" y="23" width="11.5" height="14"/><text class="t" x="651.2" y="34">평</text>
</svg>
</body></html>
